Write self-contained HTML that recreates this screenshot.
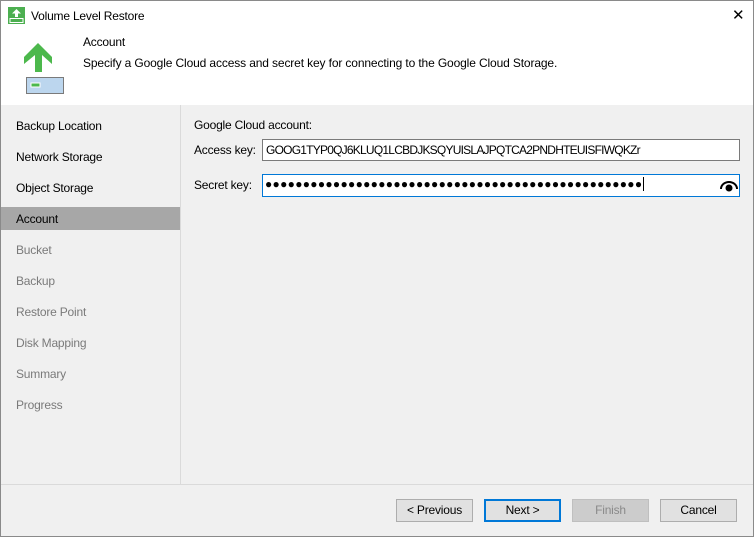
<!DOCTYPE html>
<html><head><style>
*{margin:0;padding:0;box-sizing:border-box}
body{width:754px;height:537px;background:#f0f0f0;font-family:"Liberation Sans","DejaVu Sans",sans-serif;font-size:12px;color:#000;position:relative;overflow:hidden}
.win{position:absolute;left:0;top:0;width:754px;height:537px;border:1px solid #8a8a8a}
.abs{position:absolute;white-space:nowrap}
.nav div{position:absolute;left:16px;font-size:12px;letter-spacing:-0.2px}
.btn{position:absolute;top:499px;width:77px;height:23px;border:1px solid #adadad;background:#e1e1e1;text-align:center;line-height:21px;letter-spacing:-0.2px}
</style></head><body>
<div class="abs" style="left:0;top:0;width:754px;height:105px;background:#fff"></div>
<svg class="abs" style="left:8px;top:7px" width="17" height="17"><rect x="0" y="0" width="17" height="17" fill="#4caf50"/><path d="M8.5 2 L13 6.5 H10 V10 H7 V6.5 H4 Z" fill="#fff"/><rect x="2" y="11.5" width="13" height="4" fill="none" stroke="#fff" stroke-width="1"/></svg>
<div class="abs" style="left:31px;top:9px;font-size:12px;letter-spacing:-0.2px">Volume Level Restore</div>
<div class="abs" style="left:732px;top:6px;font-size:15px">✕</div>
<svg class="abs" style="left:0;top:0" width="80" height="100"><path d="M38 43 L52 57 V64 L42 55 V72 H35 V55 L24 64 V57 Z" fill="#4cb84c"/><rect x="26.5" y="77.5" width="37" height="16" fill="#bcd6ee" stroke="#7a7a7a"/><rect x="31" y="83" width="9" height="4" fill="#4cb84c" stroke="#fff"/></svg>
<div class="abs" style="left:83px;top:35px;letter-spacing:-0.2px">Account</div>
<div class="abs" style="left:83px;top:56px;letter-spacing:-0.13px">Specify a Google Cloud access and secret key for connecting to the Google Cloud Storage.</div>
<div class="abs" style="left:180px;top:105px;width:1px;height:379px;background:#dadada"></div>
<div class="abs" style="left:0;top:484px;width:754px;height:1px;background:#dadada"></div>
<div class="abs" style="left:1px;top:207px;width:179px;height:23px;background:#a7a7a7"></div>
<div class="nav">
<div style="top:119px">Backup Location</div>
<div style="top:150px">Network Storage</div>
<div style="top:181px">Object Storage</div>
<div style="top:212px">Account</div>
<div style="top:243px;color:#7a7a7a">Bucket</div>
<div style="top:274px;color:#7a7a7a">Backup</div>
<div style="top:305px;color:#7a7a7a">Restore Point</div>
<div style="top:336px;color:#7a7a7a">Disk Mapping</div>
<div style="top:367px;color:#7a7a7a">Summary</div>
<div style="top:398px;color:#7a7a7a">Progress</div>
</div>
<div class="abs" style="left:194px;top:118px;letter-spacing:-0.2px">Google Cloud account:</div>
<div class="abs" style="left:194px;top:143px;letter-spacing:-0.2px">Access key:</div>
<div class="abs" style="left:262px;top:139px;width:478px;height:22px;background:#fff;border:1px solid #7a7a7a;padding:3px 3px;letter-spacing:-0.77px">GOOG1TYP0QJ6KLUQ1LCBDJKSQYUISLAJPQTCA2PNDHTEUISFIWQKZr</div>
<div class="abs" style="left:194px;top:178px;letter-spacing:-0.2px">Secret key:</div>
<div class="abs" style="left:262px;top:174px;width:478px;height:23px;background:#fff;border:1px solid #0078d7;padding:2px 2px;font-size:12px;letter-spacing:0.3px">●●●●●●●●●●●●●●●●●●●●●●●●●●●●●●●●●●●●●●●●●●●●●●●●●●<span style="border-left:1px solid #000;margin-left:1px"></span></div>
<svg class="abs" style="left:719px;top:178px" width="20" height="14"><path d="M2 11 A8 7 0 0 1 18 11" fill="none" stroke="#000" stroke-width="2"/><circle cx="10" cy="10" r="3.5" fill="#000"/></svg>
<div class="btn" style="left:396px">&lt; Previous</div>
<div class="btn" style="left:484px;border:1px solid #0078d7;box-shadow:inset 0 0 0 1px #0078d7">Next &gt;</div>
<div class="btn" style="left:572px;background:#cccccc;border-color:#bfbfbf;color:#8a8a8a">Finish</div>
<div class="btn" style="left:660px">Cancel</div>
<div class="win"></div>
</body></html>
